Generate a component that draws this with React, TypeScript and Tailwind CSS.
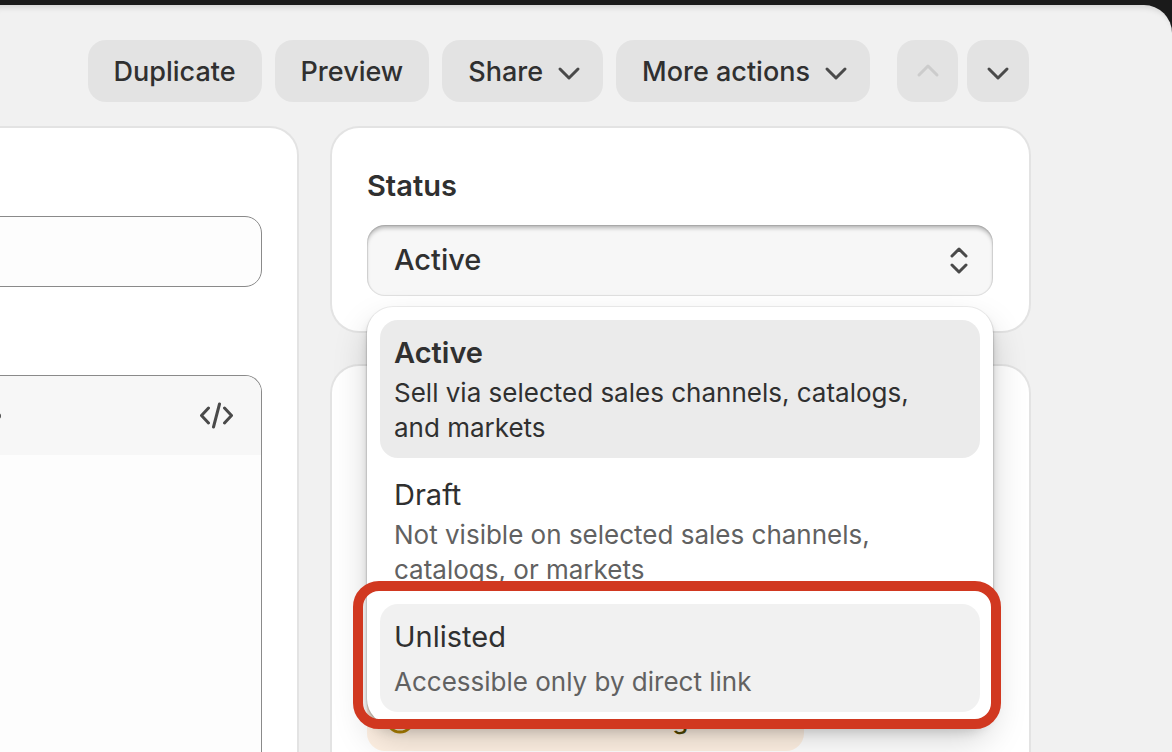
import { useState, type ReactNode } from 'react'

const cardClass = 'bg-white rounded-[27px] shadow-[0_0_0_2px_#e3e3e3]'
const buttonClass =
  'flex items-center rounded-[18px] bg-[#e3e3e3] h-[62px] text-[27px] font-medium text-[#303030] hover:bg-[#d9d9d9] disabled:text-[#cccccc]'

type IconProps = {
  d: string
  className?: string
  width?: number
  height?: number
}

function Icon({ d, className = '', width = 24, height = 24 }: IconProps) {
  return (
    <svg
      width={width}
      height={height}
      viewBox={`0 0 ${width} ${height}`}
      fill="none"
      stroke="currentColor"
      strokeWidth={3}
      strokeLinecap="round"
      strokeLinejoin="round"
      className={`shrink-0 ${className}`}
      aria-hidden
    >
      <path d={d} />
    </svg>
  )
}

const chevronDown = 'M3 10l9 9 9-9'
const chevronUp = 'M3 16l9-9 9 9'
const chevronDownMenu = 'M3 9l9 9 9-9'

function ActionButton({ children, menu = false }: { children: ReactNode; menu?: boolean }) {
  return (
    <button type="button" className={`${buttonClass} gap-3.5 pt-0.5 ${menu ? 'pl-[26px] pr-[22px]' : 'px-[26px]'}`}>
      {children}
      {menu && <Icon d={chevronDownMenu} className="text-[#4a4a4a]" />}
    </button>
  )
}

const options = [
  { value: 'Active', description: 'Sell via selected sales channels, catalogs, and markets' },
  { value: 'Draft', description: 'Not visible on selected sales channels, catalogs, or markets' },
  { value: 'Unlisted', description: 'Accessible only by direct link', highlighted: true },
]

function StatusMenu({ selected, onSelect }: { selected: string; onSelect: (value: string) => void }) {
  return (
    <ul className="absolute inset-x-0 top-full z-10 mt-[11px] space-y-1 rounded-[26px] bg-white p-[13px] shadow-[0_0_0_1px_rgba(0,0,0,0.06),0_2px_3px_rgba(0,0,0,0.18),0_8px_12px_-2px_rgba(0,0,0,0.16),0_16px_36px_-2px_rgba(0,0,0,0.18)]">
      {options.map(({ value, description, highlighted }) => {
        const active = value === selected
        return (
          <li key={value} className="relative">
            <button
              type="button"
              onClick={() => onSelect(value)}
              className={`flex w-full flex-col rounded-[18px] py-[13px] pl-3.5 pr-9 text-left ${
                active ? 'bg-[#ebebeb]' : highlighted ? 'bg-[#f1f1f1]' : ''
              } ${highlighted ? 'gap-[7px]' : 'gap-0.5'}`}
            >
              <span className={`text-[29px] leading-10 text-[#303030] ${active ? 'font-semibold' : ''}`}>{value}</span>
              <span className={`text-[26px] leading-[35px] ${active ? 'text-[#303030]' : 'text-[#616161]'}`}>
                {description}
              </span>
            </button>
            {highlighted && (
              <div className="pointer-events-none absolute -bottom-[17px] -left-[27px] -right-[21px] -top-[23px] rounded-[26px] border-10 border-[#d13820]" />
            )}
          </li>
        )
      })}
    </ul>
  )
}

function StatusCard() {
  const [status, setStatus] = useState('Active')
  return (
    <section className={`pb-[35px] pl-[35px] pr-9 pt-[38px] ${cardClass}`}>
      <label htmlFor="status" className="block text-[29px] font-semibold leading-10 text-[#303030]">
        Status
      </label>
      <div className="relative mt-[19px]">
        <select
          id="status"
          value={status}
          onChange={(e) => setStatus(e.target.value)}
          className="block h-[71px] w-full appearance-none rounded-[18px] bg-[#f7f7f7] px-[27px] pb-0.5 text-[29px] font-medium text-[#303030] shadow-[inset_0_4px_4px_-1px_rgba(0,0,0,0.28),inset_0_0_1px_1px_rgba(0,0,0,0.1)]"
        >
          {options.map(({ value }) => (
            <option key={value}>{value}</option>
          ))}
        </select>
        <Icon
          d="M3 11l7-7 7 7M3 20l7 7 7-7"
          width={20}
          height={31}
          className="pointer-events-none absolute right-6 top-5 text-[#4a4a4a]"
        />
        <StatusMenu selected={status} onSelect={setStatus} />
      </div>
    </section>
  )
}

function DetailsCard() {
  return (
    <section className={`-ml-8 flex min-w-0 flex-1 flex-col rounded-b-none pl-8 pr-[35px] pt-[88px] ${cardClass}`}>
      <input
        type="text"
        aria-label="Title"
        className="-ml-8 h-[71px] rounded-[17px] border border-[#8a8a8a] bg-[#fdfdfd] px-6 text-[29px]"
      />
      <div className="-ml-8 mt-[88px] flex flex-1 flex-col overflow-hidden rounded-t-[17px] border border-b-0 border-[#8a8a8a] bg-[#fdfdfd]">
        <div className="flex h-[79px] items-center justify-between bg-[#f7f7f7] pl-[26px] pr-7">
          <span className="size-[6px] rounded-full bg-[#4a4a4a]" />
          <button type="button" aria-label="Show HTML" className="text-[#4a4a4a]">
            <Icon d="M10.500 10l-7 7.500 7 7.500M21.500 6l-6 23M26.500 10l7 7.500-7 7.500" width={35} height={35} />
          </button>
        </div>
        <textarea aria-label="Description" className="w-full flex-1 resize-none p-6 text-[29px]" />
      </div>
    </section>
  )
}

export default function App() {
  return (
    <div className="h-screen overflow-hidden bg-[#1a1a1a] pt-[5px] font-['Inter',sans-serif]">
      <main className="flex h-full flex-col rounded-tr-[28px] bg-[#f1f1f1] pr-[143px] pt-[35px] shadow-[inset_0_8px_6px_-6px_rgba(0,0,0,0.14)]">
        <div className="flex justify-end gap-[13px]">
          <ActionButton>Duplicate</ActionButton>
          <ActionButton>Preview</ActionButton>
          <ActionButton menu>Share</ActionButton>
          <ActionButton menu>More actions</ActionButton>
          <div className="ml-3.5 flex gap-[9px]">
            <button type="button" disabled aria-label="Previous" className={`${buttonClass} w-[61px] justify-center`}>
              <Icon d={chevronUp} />
            </button>
            <button type="button" aria-label="Next" className={`${buttonClass} w-[62px] justify-center`}>
              <Icon d={chevronDown} className="text-[#4a4a4a]" />
            </button>
          </div>
        </div>
        <div className="mt-[26px] flex min-h-0 flex-1 gap-[35px]">
          <DetailsCard />
          <div className="flex w-[697px] shrink-0 flex-col gap-[35px]">
            <StatusCard />
            <section className={`flex flex-1 flex-col items-start rounded-b-none px-[35px] pt-[321px] ${cardClass}`}>
              <div className="flex h-16 w-[437px] shrink-0 items-center gap-5 rounded-[18px] bg-[#fff1e3] px-[18px] text-[26px] font-medium text-[#4f4700]">
                <svg width="30" height="30" viewBox="0 0 30 30" fill="none" stroke="#b28400" strokeWidth="3" className="shrink-0" aria-hidden>
                  <circle cx="15" cy="15" r="13" />
                </svg>
                Excluded from Google
              </div>
            </section>
          </div>
        </div>
      </main>
    </div>
  )
}
